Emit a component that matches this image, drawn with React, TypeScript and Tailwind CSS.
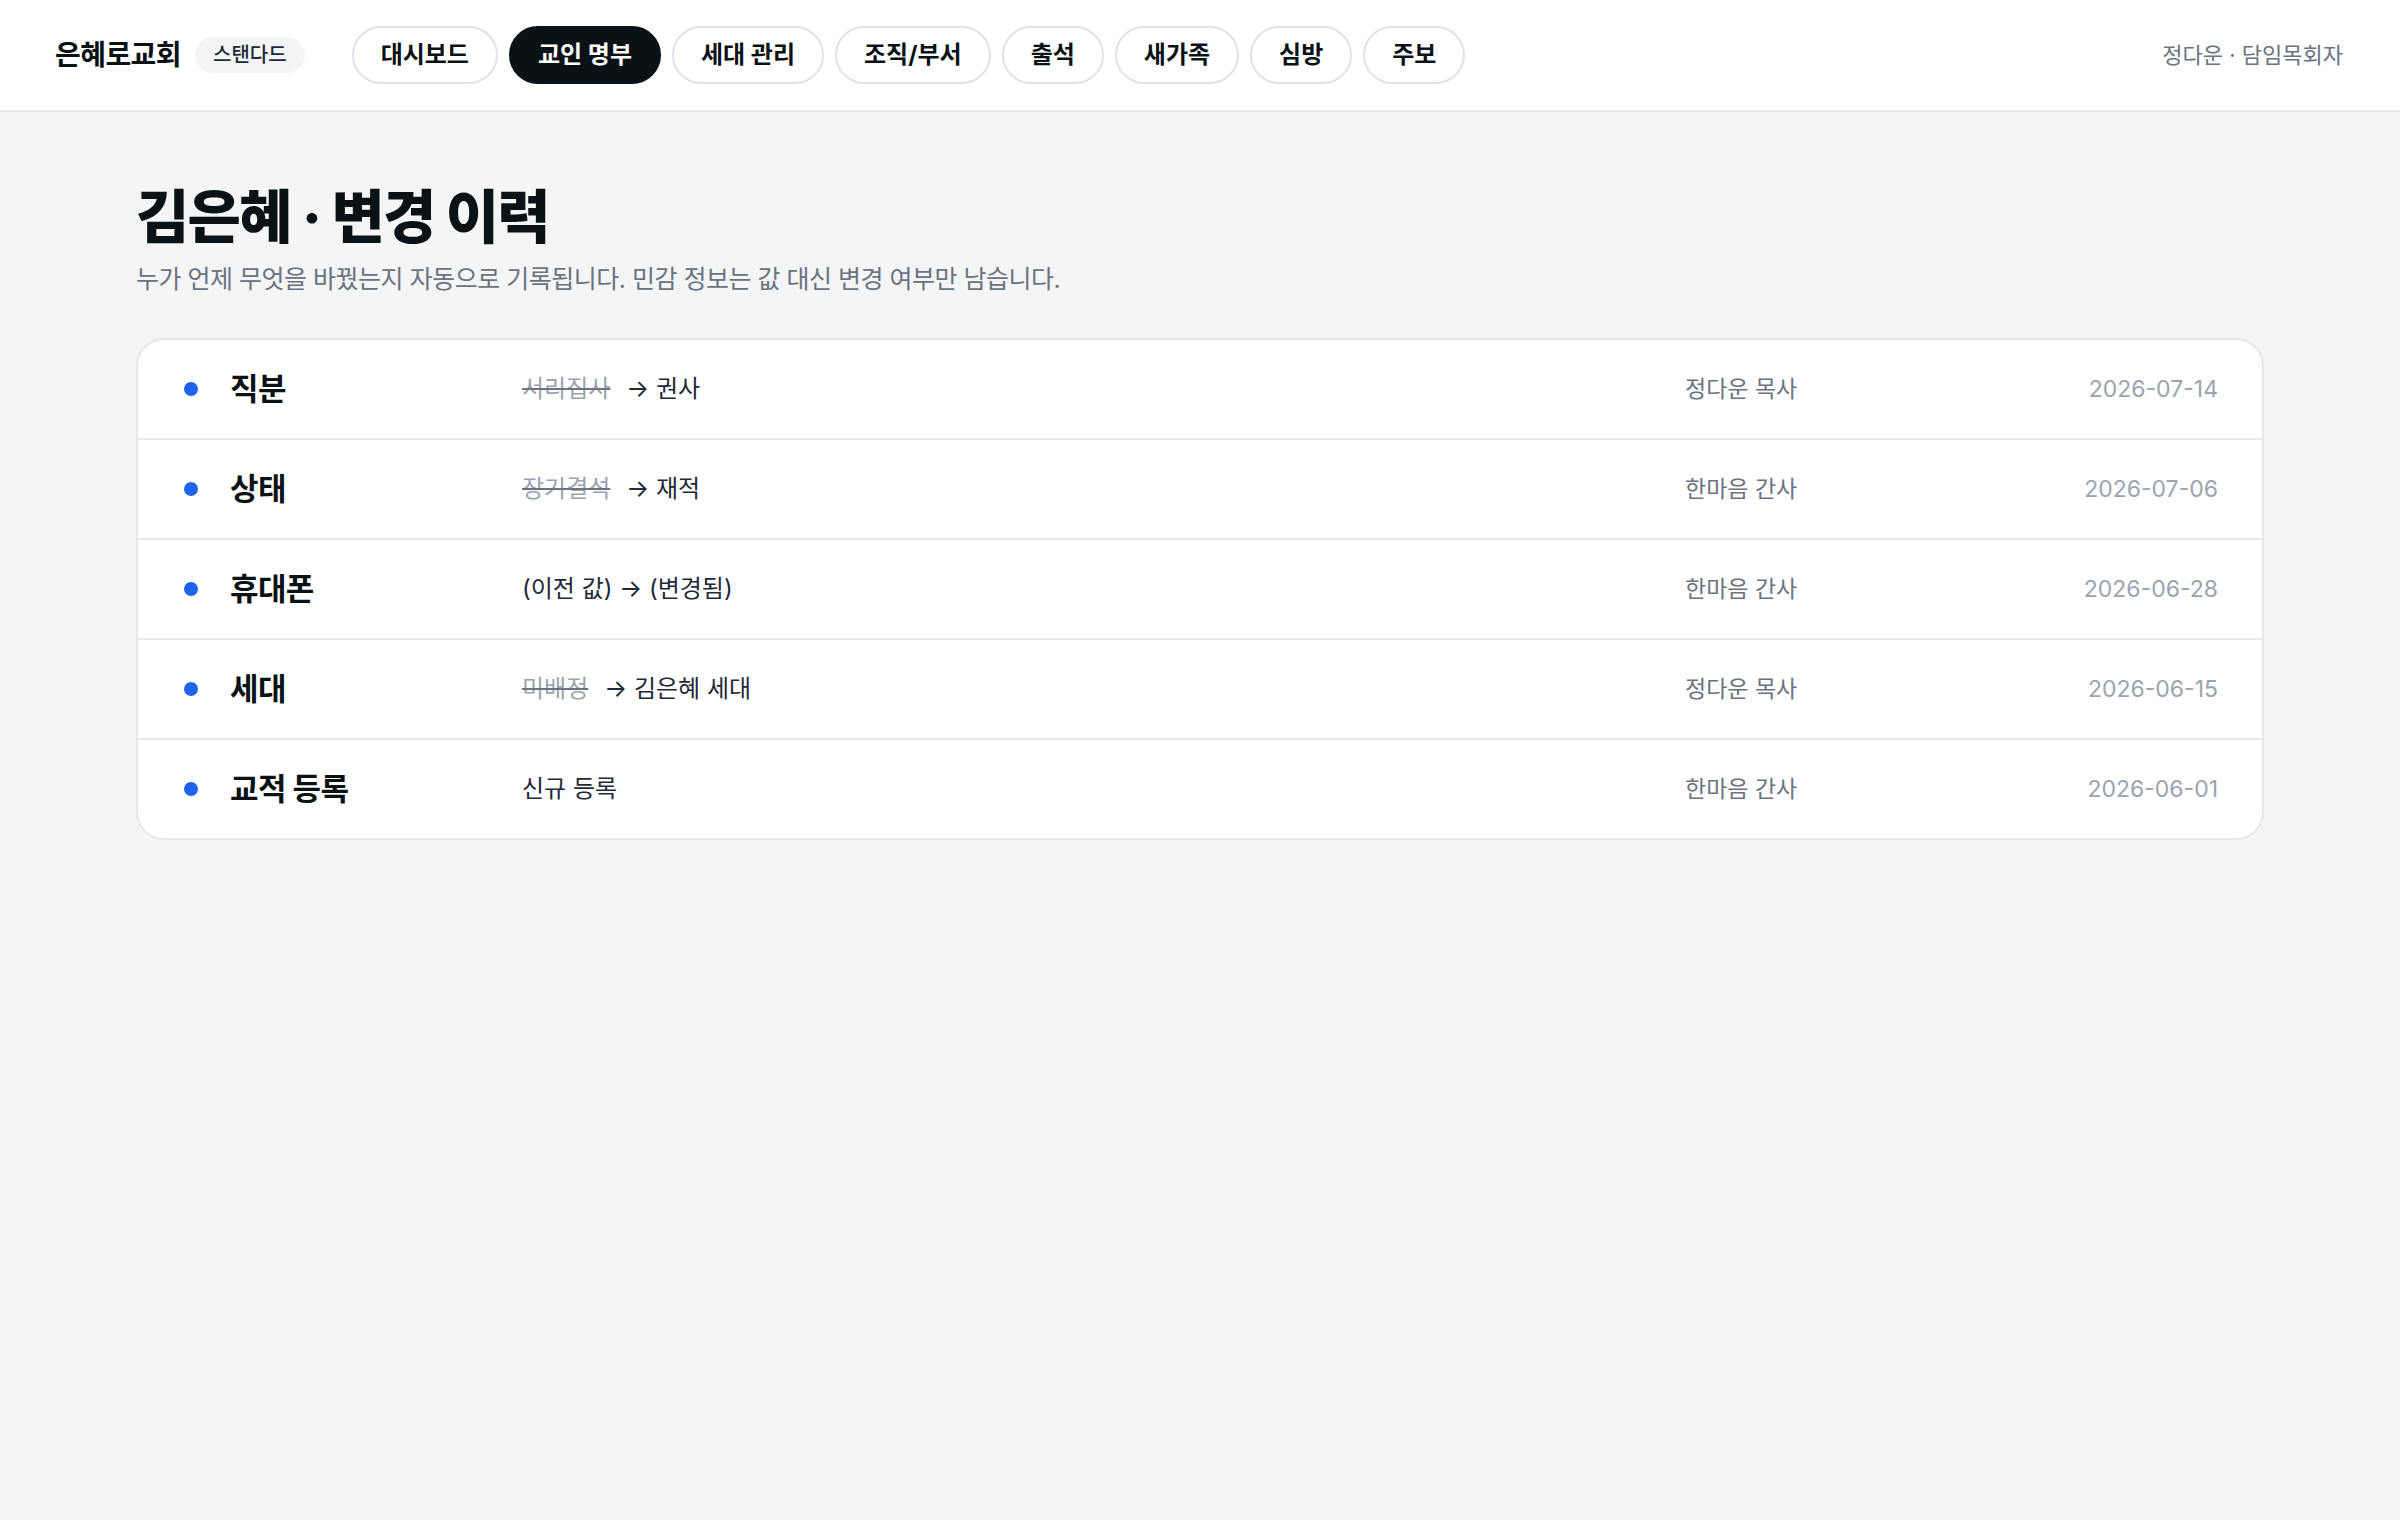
const navItems = ["대시보드", "교인 명부", "세대 관리", "조직/부서", "출석", "새가족", "심방", "주보"];

type HistoryRow = {
  field: string;
  from?: string;
  to: string;
  plain?: boolean;
  actor: string;
  date: string;
};

const rows: HistoryRow[] = [
  { field: "직분", from: "서리집사", to: "권사", actor: "정다운 목사", date: "2026-07-14" },
  { field: "상태", from: "장기결석", to: "재적", actor: "한마음 간사", date: "2026-07-06" },
  { field: "휴대폰", to: "(이전 값) → (변경됨)", plain: true, actor: "한마음 간사", date: "2026-06-28" },
  { field: "세대", from: "미배정", to: "김은혜 세대", actor: "정다운 목사", date: "2026-06-15" },
  { field: "교적 등록", to: "신규 등록", plain: true, actor: "한마음 간사", date: "2026-06-01" },
];

function TopBar() {
  return (
    <header className="flex h-[112px] items-center border-b-2 border-[#e5e7eb] bg-white pl-[55px] pr-[57px]">
      <span className="text-[28px] font-bold tracking-[-0.02em] text-[#0b1215]">은혜로교회</span>
      <span className="ml-[14px] flex h-[36px] items-center rounded-full bg-[#f3f4f6] px-[18px] text-[20px] font-medium text-[#1f2937]">
        스탠다드
      </span>
      <nav className="ml-[47px] flex items-center gap-[11px]">
        {navItems.map((item) =>
          item === "교인 명부" ? (
            <button
              key={item}
              className="flex h-[58px] items-center rounded-full border-2 border-[#0b1215] bg-[#0b1215] px-[27px] text-[24px] font-bold text-white"
              type="button"
            >
              {item}
            </button>
          ) : (
            <button
              key={item}
              className="flex h-[58px] items-center rounded-full border-2 border-[#dfe2e6] bg-white px-[27px] text-[24px] font-bold text-[#0b1215]"
              type="button"
            >
              {item}
            </button>
          ),
        )}
      </nav>
      <div className="flex-1" />
      <span className="text-[22px] text-[#6b7280]">정다운 · 담임목회자</span>
    </header>
  );
}

function ChangeCell({ row }: { row: HistoryRow }) {
  if (row.plain) {
    return <span className="text-[#1f2937]">{row.to}</span>;
  }
  return (
    <span className="flex items-center gap-[16px]">
      <span className="text-[#9ca3af] line-through decoration-[#6b7280]">{row.from}</span>
      <span className="text-[#1f2937]">→ {row.to}</span>
    </span>
  );
}

export default function App() {
  return (
    <div
      className="min-h-[1520px] bg-[#f4f5f7]"
      style={{ fontFamily: 'Inter, "Noto Sans CJK KR", sans-serif' }}
    >
      <TopBar />
      <main className="px-[136px] pt-[71px]">
        <h1 className="text-[58px] font-extrabold leading-[1.2] tracking-[-0.03em] text-[#0b1215]">
          김은혜 · 변경 이력
        </h1>
        <p className="mt-[8px] text-[25px] leading-[1.5] tracking-[-0.02em] text-[#6b7280]">
          누가 언제 무엇을 바꿨는지 자동으로 기록됩니다. 민감 정보는 값 대신 변경 여부만 남습니다.
        </p>
        <section className="mt-[40px] overflow-hidden rounded-[28px] border-2 border-[#e5e7eb] bg-white">
          {rows.map((row, i) => (
            <div
              key={row.field}
              className={
                i === 0
                  ? "flex h-[98px] items-center pl-[46px] pr-[44px] text-[24px]"
                  : "flex h-[100px] items-center border-t-2 border-[#e5e7eb] pl-[46px] pr-[44px] text-[24px]"
              }
            >
              <span className="h-[14px] w-[14px] shrink-0 rounded-full bg-[#1d63ed]" />
              <span className="ml-[32px] w-[292px] shrink-0 text-[31px] font-bold tracking-[-0.02em] text-[#0b1215]">
                {row.field}
              </span>
              <div className="flex-1">
                <ChangeCell row={row} />
              </div>
              <span className="w-[333px] text-[23px] text-[#6b7280]">{row.actor}</span>
              <span className="w-[200px] text-right text-[23px] text-[#9ca3af]">{row.date}</span>
            </div>
          ))}
        </section>
      </main>
    </div>
  );
}
